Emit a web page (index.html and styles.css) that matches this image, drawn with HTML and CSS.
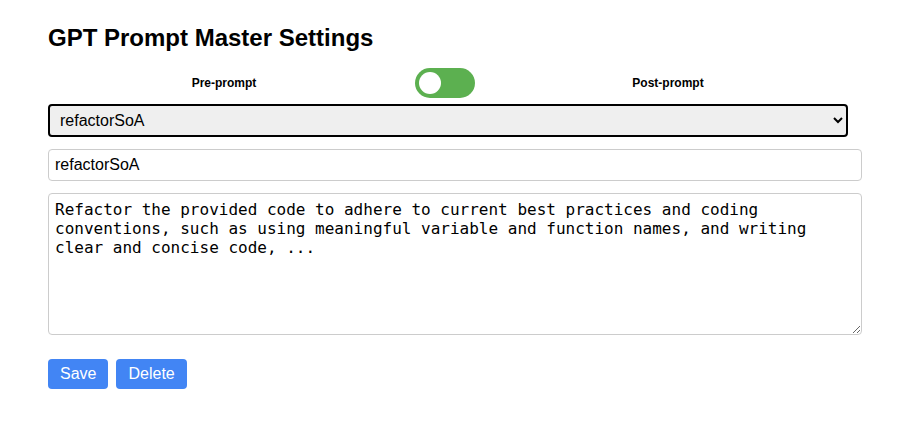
FILE: index.html
```html
<!DOCTYPE html>
<html lang="en">
<head>
<meta charset="utf-8">
<title>GPT Prompt Master Settings</title>
<link rel="stylesheet" href="styles.css">
</head>
<body>
<main class="settings">
  <h1 class="title">GPT Prompt Master Settings</h1>
  <div class="mode-row">
    <span class="mode-label">Pre-prompt</span>
    <label class="switch">
      <input type="checkbox" class="switch-input">
      <span class="switch-track"><span class="switch-knob"></span></span>
    </label>
    <span class="mode-label">Post-prompt</span>
  </div>
  <select class="prompt-select">
    <option>refactorSoA</option>
  </select>
  <input class="name-input" type="text" value="refactorSoA">
  <textarea class="prompt-text">Refactor the provided code to adhere to current best practices and coding conventions, such as using meaningful variable and function names, and writing clear and concise code, ...</textarea>
  <div class="actions">
    <button class="btn">Save</button>
    <button class="btn">Delete</button>
  </div>
</main>
</body>
</html>
```
FILE: styles.css
```css
html, body {
  margin: 0;
  padding: 0;
  background: #fff;
}
body {
  font-family: "Liberation Sans", Arial, sans-serif;
  color: #000;
}
.settings {
  display: flex;
  flex-direction: column;
  align-items: flex-start;
  padding: 24px 40px 0 48px;
}
.title {
  margin: 0;
  font-size: 24px;
  font-weight: bold;
  line-height: 28px;
}
.mode-row {
  display: grid;
  grid-template-columns: 352px 60px 356px;
  column-gap: 15px;
  align-items: center;
  margin-top: 16px;
  width: 800px;
}
.mode-label {
  text-align: center;
  font-size: 12px;
  font-weight: bold;
}
.switch {
  position: relative;
  display: block;
  width: 60px;
  height: 30px;
}
.switch-input {
  position: absolute;
  opacity: 0;
  width: 0;
  height: 0;
  margin: 0;
}
.switch-track {
  position: absolute;
  inset: 0;
  background: #5cb050;
  border-radius: 15px;
}
.switch-knob {
  position: absolute;
  left: 4px;
  top: 4px;
  width: 22px;
  height: 22px;
  border-radius: 50%;
  background: #fff;
}
.prompt-select {
  margin-top: 6px;
  width: 800px;
  height: 33px;
  box-sizing: border-box;
  border: 2px solid #000;
  border-radius: 4px;
  background-color: #efefef;
  font-family: "Liberation Sans", Arial, sans-serif;
  font-size: 16px;
  color: #000;
  padding: 0 6px;
}
.name-input {
  margin-top: 12px;
  width: 814px;
  height: 32px;
  box-sizing: border-box;
  border: 1px solid #ccc;
  border-radius: 4px;
  padding: 0 6px;
  font-family: "Liberation Sans", Arial, sans-serif;
  font-size: 16px;
  color: #000;
}
.prompt-text {
  margin-top: 12px;
  width: 814px;
  height: 142px;
  box-sizing: border-box;
  border: 1px solid #ccc;
  border-radius: 4px;
  padding: 6px;
  font-family: "DejaVu Sans Mono", monospace;
  font-size: 16px;
  line-height: 19px;
  color: #000;
}
.actions {
  display: flex;
  gap: 8px;
  margin-top: 24px;
}
.btn {
  height: 30px;
  padding: 0 12px;
  border: none;
  border-radius: 4px;
  background: #4285f4;
  color: #fff;
  font-family: "Liberation Sans", Arial, sans-serif;
  font-size: 16px;
}
```
